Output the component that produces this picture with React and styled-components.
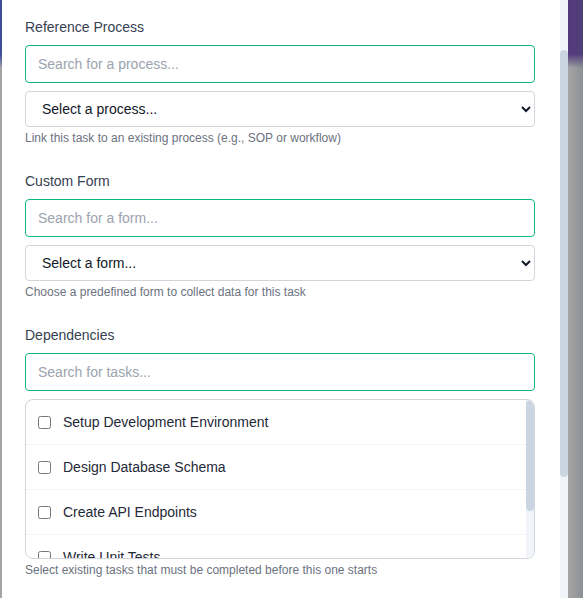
import styled, { createGlobalStyle } from 'styled-components'

const GlobalStyle = createGlobalStyle`
html, body {
  margin: 0;
  height: 100%;
  overflow: hidden;
}
body {
  font-family: "Liberation Sans", Arial, sans-serif;
}
* {
  box-sizing: border-box;
}
`;

const Page = styled.div`
display: flex;
height: 598px;
background:
  linear-gradient(to right, rgba(70, 85, 110, 0) 570px, rgba(70, 85, 110, 0.25) 583px),
  linear-gradient(to bottom, rgba(163, 163, 163, 0) 54px, #a3a3a3 68px),
  linear-gradient(to right, #3d4c9c, #533a7a);
`;

const Panel = styled.div`
margin-left: 2px;
width: 566px;
height: 100%;
background: #fff;
display: flex;
`;

const Body = styled.div`
flex: 1;
padding: 17px 25px 0 23px;
`;

// scrollbar drawn as a column, the headless browser hides real ones
const Track = styled.div`
flex: none;
width: 8px;
background: #f1f5f9;
padding-top: ${props => props.offset || 0}px;
`;

const Thumb = styled.div`
height: ${props => props.size}px;
background: #cbd5e1;
border-radius: 4px;
`;

const Section = styled.div`
display: flex;
flex-direction: column;
gap: 8px;
margin-bottom: 26px;
`;

const Label = styled.label`
font-size: 14px;
line-height: 20px;
color: #374151;
`;

const Search = styled.input`
width: 100%;
height: 38px;
padding: 10px 12px;
font: 14px "Liberation Sans", Arial, sans-serif;
color: #111827;
border: 1px solid #10b981;
border-radius: 4px;
outline: none;
&::placeholder {
  color: #9ca3af;
}
`;

const Select = styled.select`
width: 100%;
height: 36px;
padding: 0 8px 0 12px;
font: 14px "Liberation Sans", Arial, sans-serif;
color: #111827;
background: #fff;
border: 1px solid #d1d5db;
border-radius: 4px;
outline: none;
`;

const Help = styled.p`
margin: -4px 0 0;
font-size: 12px;
line-height: 14px;
color: #6b7280;
`;

const List = styled.div`
display: flex;
height: 160px;
overflow: hidden;
border: 1px solid #d1d5db;
border-radius: 8px;
`;

const Items = styled.div`
flex: 1;
overflow: hidden;
`;

const Row = styled.label`
display: flex;
align-items: center;
gap: 12px;
padding: 12px;
font-size: 14px;
line-height: 20px;
color: #1f2937;
border-bottom: 1px solid #f3f4f6;
&:last-child {
  border-bottom: none;
}
`;

const Check = styled.input`
margin: 0;
width: 13px;
height: 13px;
`;

const tasks = [
  'Setup Development Environment',
  'Design Database Schema',
  'Create API Endpoints',
  'Write Unit Tests',
  'Deploy to Staging',
];

const App = () => {
  return (
    <Page>
      <GlobalStyle />
      <Panel>
        <Body>
          <Section>
            <Label>Reference Process</Label>
            <Search placeholder="Search for a process..." />
            <Select defaultValue="">
              <option value="">Select a process...</option>
            </Select>
            <Help>Link this task to an existing process (e.g., SOP or workflow)</Help>
          </Section>

          <Section>
            <Label>Custom Form</Label>
            <Search placeholder="Search for a form..." />
            <Select defaultValue="">
              <option value="">Select a form...</option>
            </Select>
            <Help>Choose a predefined form to collect data for this task</Help>
          </Section>

          <Section>
            <Label>Dependencies</Label>
            <Search placeholder="Search for tasks..." />
            <List>
              <Items>
                {tasks.map(t => (
                  <Row key={t}>
                    <Check type="checkbox" />
                    {t}
                  </Row>
                ))}
              </Items>
              <Track>
                <Thumb size={111} />
              </Track>
            </List>
            <Help>Select existing tasks that must be completed before this one starts</Help>
          </Section>
        </Body>
        <Track offset={50}>
          <Thumb size={427} />
        </Track>
      </Panel>
    </Page>
  );
};

export default App;
